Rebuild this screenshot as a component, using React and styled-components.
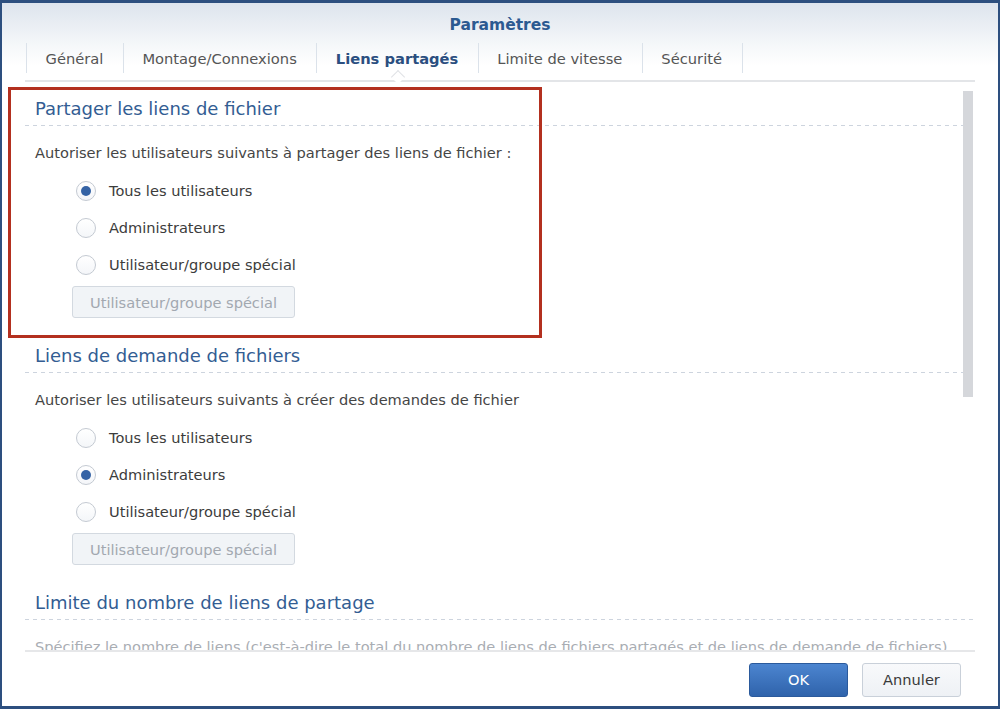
import React from "react";
import styled, { createGlobalStyle } from "styled-components";

const GlobalStyle = createGlobalStyle`
  html, body {
    margin: 0;
    padding: 0;
    background: #ffffff;
  }
  body {
    font-family: "DejaVu Sans", Verdana, sans-serif;
  }
`

const Window = styled.div`
  position: relative;
  width: 1000px;
  height: 709px;
  box-sizing: border-box;
  border-style: solid;
  border-color: #2d4f7f;
  border-width: 3px 2px 3px 2px;
  display: flex;
  flex-direction: column;
  background: #ffffff;
  overflow: hidden;
`

const Header = styled.div`
  height: 79px;
  flex: none;
  display: flex;
  flex-direction: column;
  background: linear-gradient(to bottom, #dde4ed 0%, #f6f8fa 55%, #ffffff 80%);
`

const Title = styled.div`
  height: 40px;
  line-height: 44px;
  text-align: center;
  font-size: 15.5px;
  font-weight: bold;
  color: #2c5a91;
`

const TabBar = styled.div`
  margin: 0 23px;
  height: 39px;
  box-sizing: border-box;
  display: flex;
  align-items: flex-start;
  padding-left: 1px;
  border-bottom: 2px solid #e3e5e8;
`

const Tab = styled.div`
  position: relative;
  height: 30px;
  line-height: 32px;
  padding: 0 19.5px 0 18.5px;
  border-left: 1px solid #dbe2ea;
  font-size: 14.7px;
  color: ${(p) => (p.$active ? "#2b4f80" : "#555555")};
  font-weight: ${(p) => (p.$active ? "bold" : "normal")};

  &:last-child {
    border-right: 1px solid #dbe2ea;
  }

  &::after {
    content: "";
    display: ${(p) => (p.$active ? "block" : "none")};
    position: absolute;
    left: 50%;
    bottom: -9px;
    width: 9px;
    height: 9px;
    margin-left: -5px;
    background: #ffffff;
    border-left: 1px solid #e0e2e6;
    border-top: 1px solid #e0e2e6;
    transform: rotate(45deg);
  }
`

const Body = styled.div`
  flex: 1;
  display: flex;
  padding: 0 23px;
  min-height: 0;
`

const Panel = styled.div`
  position: relative;
  flex: 1;
  overflow: hidden;
  border-bottom: 2px solid #e6e7e9;
`

const Section = styled.div`
  padding: 15px 0 11px;
`

const SectionTitle = styled.div`
  font-size: 18px;
  line-height: 24px;
  color: #335d93;
  padding: 0 0 5px 10px;
  background-image: linear-gradient(to right, #cdd4de 50%, transparent 50%);
  background-size: 8px 1px;
  background-repeat: repeat-x;
  background-position: left bottom;
`

const Desc = styled.div`
  margin-top: 17px;
  padding-left: 10px;
  font-size: 14.6px;
  line-height: 20px;
  color: ${(p) => (p.$faded ? "#a9adb3" : "#454545")};
  white-space: nowrap;
`

const RadioList = styled.div`
  margin-top: 9px;
  display: flex;
  flex-direction: column;
`

const RadioRow = styled.label`
  height: 37px;
  display: flex;
  align-items: center;
  padding-left: 51px;
  font-size: 14.6px;
  color: #3c3c3c;
`

const RadioDot = styled.span`
  width: 20px;
  height: 20px;
  box-sizing: border-box;
  border-radius: 50%;
  border: 1px solid #c4cad2;
  background: linear-gradient(to bottom, #ffffff, #f4f6f9);
  margin-right: 13px;
  display: flex;
  align-items: center;
  justify-content: center;
  flex: none;

  &::before {
    content: "";
    display: ${(p) => (p.$checked ? "block" : "none")};
    width: 10px;
    height: 10px;
    border-radius: 50%;
    background: #3563a5;
  }
`

const GhostButton = styled.div`
  margin: 3px 0 0 47px;
  width: 223px;
  height: 32px;
  box-sizing: border-box;
  border: 1px solid #d3d9e0;
  border-radius: 3px;
  background: #f1f4f7;
  color: #a2a8b0;
  font-size: 14.6px;
  display: flex;
  align-items: center;
  justify-content: center;
`

const Scrollbar = styled.div`
  position: absolute;
  top: 9px;
  right: 2px;
  width: 10px;
  height: 306px;
  background: #d5d7db;
`

const Highlight = styled.div`
  position: absolute;
  left: 6px;
  top: 84px;
  width: 534px;
  height: 251px;
  box-sizing: border-box;
  border: 3px solid #b3301f;
  pointer-events: none;
`

const Footer = styled.div`
  height: 54px;
  flex: none;
  display: flex;
  align-items: center;
  justify-content: flex-end;
  gap: 14px;
  padding: 1px 37px 0 0;
  box-sizing: border-box;
`

const Button = styled.div`
  width: 99px;
  height: 34px;
  box-sizing: border-box;
  border-radius: 3px;
  display: flex;
  align-items: center;
  justify-content: center;
  font-size: 14.6px;
  border: 1px solid ${(p) => (p.$primary ? "#2b5a9c" : "#c9d0d9")};
  background: ${(p) =>
    p.$primary
      ? "linear-gradient(to bottom, #4c85d0, #2f63ab)"
      : "linear-gradient(to bottom, #f8f9fb, #eef1f5)"};
  color: ${(p) => (p.$primary ? "#ffffff" : "#3a3a3a")};
`

const tabs = ["Général", "Montage/Connexions", "Liens partagés", "Limite de vitesse", "Sécurité"];
const options = ["Tous les utilisateurs", "Administrateurs", "Utilisateur/groupe spécial"];

function RadioGroup({ selected }) {
  return (
    <RadioList>
      {options.map((o, i) => (
        <RadioRow key={o}>
          <RadioDot $checked={i === selected} />
          {o}
        </RadioRow>
      ))}
    </RadioList>
  );
}

export default function App() {
  return (
    <>
      <GlobalStyle />
      <Window>
        <Header>
          <Title>Paramètres</Title>
          <TabBar>
            {tabs.map((t) => (
              <Tab key={t} $active={t === "Liens partagés"}>{t}</Tab>
            ))}
          </TabBar>
        </Header>
        <Body>
          <Panel>
            <Section>
              <SectionTitle>Partager les liens de fichier</SectionTitle>
              <Desc>Autoriser les utilisateurs suivants à partager des liens de fichier :</Desc>
              <RadioGroup selected={0} />
              <GhostButton>Utilisateur/groupe spécial</GhostButton>
            </Section>
            <Section>
              <SectionTitle>Liens de demande de fichiers</SectionTitle>
              <Desc>Autoriser les utilisateurs suivants à créer des demandes de fichier</Desc>
              <RadioGroup selected={1} />
              <GhostButton>Utilisateur/groupe spécial</GhostButton>
            </Section>
            <Section>
              <SectionTitle>Limite du nombre de liens de partage</SectionTitle>
              <Desc $faded>
                Spécifiez le nombre de liens (c'est-à-dire le total du nombre de liens de fichiers partagés et de liens de demande de fichiers)
              </Desc>
            </Section>
            <Scrollbar />
          </Panel>
        </Body>
        <Footer>
          <Button $primary>OK</Button>
          <Button>Annuler</Button>
        </Footer>
        <Highlight />
      </Window>
    </>
  );
}
